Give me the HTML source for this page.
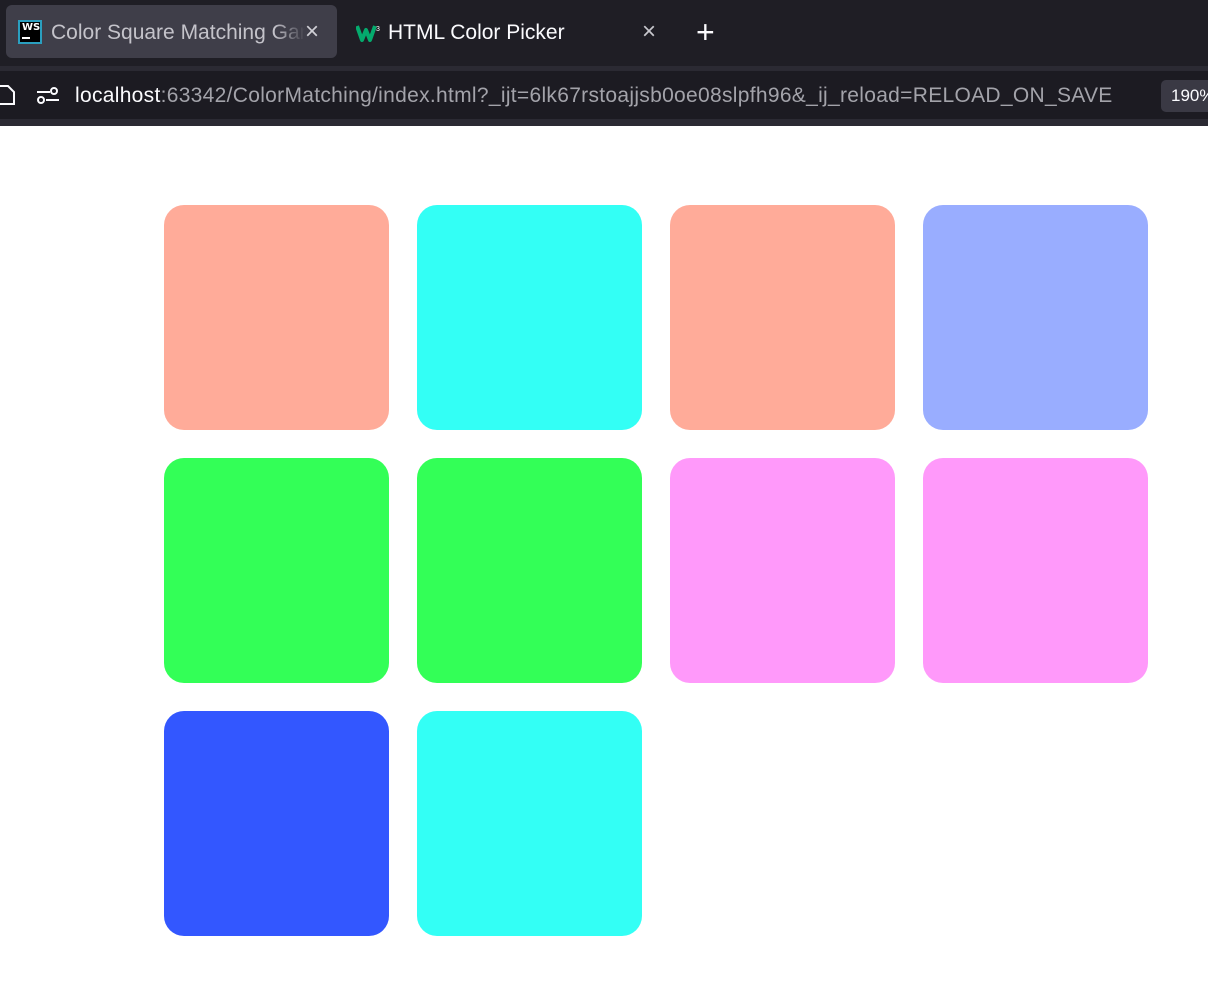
<!DOCTYPE html>
<html><head><meta charset="utf-8"><style>
*{margin:0;padding:0;box-sizing:border-box}
body{width:1208px;height:1003px;overflow:hidden;background:#fff;font-family:"Liberation Sans","DejaVu Sans",sans-serif;position:relative}
.tabs{position:absolute;left:0;top:0;width:1208px;height:66px;background:#1f1e25}
.tab{position:absolute;top:5px;height:53px;border-radius:6px;color:#fbfbfe;font-size:21px;line-height:53px}
.t1{left:6px;width:331px;background:#3f3e49}
.sep{position:absolute;left:0;top:66px;width:1208px;height:60px;background:#2b2a33}
.url{position:absolute;left:0;top:71px;width:1208px;height:48px;background:#1c1b22;color:#fbfbfe;font-size:21px;line-height:50px}
.sq{position:absolute;width:225px;height:225px;border-radius:20px}
</style></head><body>
<div class="tabs">
 <div class="tab t1">
  <div style="position:absolute;left:12px;top:15px;width:24px;height:24px;background:#000;border:2px solid #2a9fbf;color:#fff;font-family:'DejaVu Sans',sans-serif;font-size:10px;line-height:11px;font-weight:bold;padding-left:2px">WS<div style="width:8px;height:2px;background:#fff;margin-top:4px"></div></div>
  <span style="position:absolute;left:45px;top:1px;width:254px;overflow:hidden;white-space:nowrap;color:#c4c3ca;-webkit-mask-image:linear-gradient(to right,#000 88%,transparent);mask-image:linear-gradient(to right,#000 88%,transparent)">Color Square Matching Game</span>
  <span style="position:absolute;left:299px;top:0;color:#d0d0d6;font-size:24px">×</span>
 </div>
 <div class="tab" style="left:354px;width:320px">
  <svg style="position:absolute;left:2px;top:19px" width="26" height="18" viewBox="0 0 26 18"><path d="M1 2 L6 16 L10 6 L14 16 L19 2" fill="none" stroke="#04aa6d" stroke-width="4" stroke-linejoin="round"/><text x="20" y="7" font-size="7" fill="#fff">3</text></svg>
  <span style="position:absolute;left:34px;top:1px;color:#fbfbfe">HTML Color Picker</span>
  <span style="position:absolute;left:288px;top:0;color:#c8c8ce;font-size:24px">×</span>
 </div>
 <div style="position:absolute;left:696px;top:14px;color:#fbfbfe;font-size:32px;line-height:36px;font-weight:300">+</div>
</div>
<div class="sep"></div>
<div class="url">
 <svg style="position:absolute;left:-4px;top:13px" width="20" height="22" viewBox="0 0 20 22"><path d="M2 2 H12 L18 8 V20 H2 Z" fill="none" stroke="#fbfbfe" stroke-width="2"/></svg>
 <svg style="position:absolute;left:36px;top:15px" width="24" height="20" viewBox="0 0 24 20"><line x1="1" y1="6" x2="14" y2="6" stroke="#fbfbfe" stroke-width="2"/><circle cx="18" cy="5" r="3" fill="none" stroke="#fbfbfe" stroke-width="2"/><line x1="10" y1="14" x2="23" y2="14" stroke="#fbfbfe" stroke-width="2"/><circle cx="5" cy="14" r="3" fill="none" stroke="#fbfbfe" stroke-width="2"/></svg>
 <span style="position:absolute;left:75px;top:0;white-space:nowrap;letter-spacing:0.3px">localhost<span style="color:#a3a3aa">:63342/ColorMatching/index.html?_ijt=6lk67rstoajjsb0oe08slpfh96&amp;_ij_reload=RELOAD_ON_SAVE</span></span>
 <div style="position:absolute;left:1161px;top:9px;width:60px;height:32px;border-radius:5px;background:#3a3944;color:#fbfbfe;font-size:17px;line-height:32px;padding-left:10px">190%</div>
</div>
<div class="sq" style="left:163.5px;top:204.5px;background:#ffab99"></div>
<div class="sq" style="left:416.5px;top:204.5px;background:#33fff5"></div>
<div class="sq" style="left:669.5px;top:204.5px;background:#ffab99"></div>
<div class="sq" style="left:922.5px;top:204.5px;background:#99adff"></div>
<div class="sq" style="left:163.5px;top:457.5px;background:#33ff57"></div>
<div class="sq" style="left:416.5px;top:457.5px;background:#33ff57"></div>
<div class="sq" style="left:669.5px;top:457.5px;background:#ff99fa"></div>
<div class="sq" style="left:922.5px;top:457.5px;background:#ff99fa"></div>
<div class="sq" style="left:163.5px;top:710.5px;background:#3357ff"></div>
<div class="sq" style="left:416.5px;top:710.5px;background:#33fff5"></div>
</body></html>
